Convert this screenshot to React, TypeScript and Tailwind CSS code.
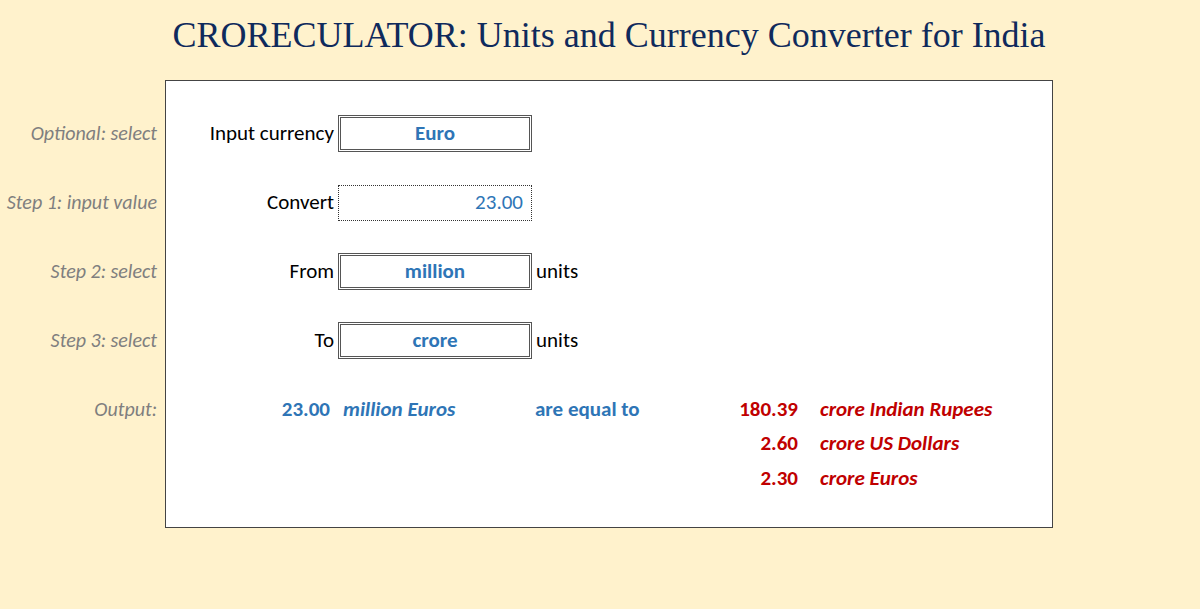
const labelFont = "font-['Carlito','Open_Sans',sans-serif]";

function StepLabel({ children }: { children: string }) {
  return (
    <div className="flex h-[69px] items-center justify-end whitespace-nowrap pr-[8px] text-[20px] italic text-[#7f7f7f]">
      <span>{children}</span>
    </div>
  );
}

function SelectBox({ value }: { value: string }) {
  return (
    <div className="flex h-[37px] w-[194px] items-center justify-center border-[3px] border-double border-[#555] bg-white text-[21px] font-bold text-[#2e75b6]">
      {value}
    </div>
  );
}

function FieldRow({
  label,
  children,
  suffix,
}: {
  label: string;
  children: React.ReactNode;
  suffix?: string;
}) {
  return (
    <div className="flex h-[69px] items-center">
      <div className="w-[168px] whitespace-nowrap text-right text-[21px] text-black">{label}</div>
      <div className="ml-[4px]">{children}</div>
      {suffix ? <div className="ml-[4px] text-[21px] text-black">{suffix}</div> : null}
    </div>
  );
}

function ResultLine({ amount, unit }: { amount: string; unit: string }) {
  return (
    <div className="flex h-[34.5px] items-center whitespace-nowrap text-[21px] font-bold text-[#c00000]">
      <div className="w-[166px] text-right">{amount}</div>
      <div className="ml-[22px] italic">{unit}</div>
    </div>
  );
}

export default function App() {
  return (
    <div className={`min-h-[609px] w-full bg-[#fff2cc] ${labelFont}`}>
      <div className="ml-[165px] w-[888px] pt-[14px] text-center font-['Liberation_Serif',serif] text-[36px] leading-[42px] text-[#0f2a5c]">
        CRORECULATOR: Units and Currency Converter for India
      </div>

      <div className="mt-[24px] flex">
        <div className="w-[165px] pt-[18px]">
          <StepLabel>Optional: select</StepLabel>
          <StepLabel>Step 1: input value</StepLabel>
          <StepLabel>Step 2: select</StepLabel>
          <StepLabel>Step 3: select</StepLabel>
          <StepLabel>Output:</StepLabel>
        </div>

        <div className="h-[448px] w-[888px] border border-[#444] bg-white pt-[18px]">
          <FieldRow label="Input currency">
            <SelectBox value="Euro" />
          </FieldRow>
          <FieldRow label="Convert">
            <div className="flex h-[36px] w-[194px] items-center justify-end border border-dotted border-[#333] pr-[8px] text-[21px] text-[#2e75b6]">
              23.00
            </div>
          </FieldRow>
          <FieldRow label="From" suffix="units">
            <SelectBox value="million" />
          </FieldRow>
          <FieldRow label="To" suffix="units">
            <SelectBox value="crore" />
          </FieldRow>

          <div className="flex pt-[17px]">
            <div className="flex h-[34.5px] w-[466px] items-center whitespace-nowrap text-[21px] font-bold text-[#2e75b6]">
              <div className="w-[164px] text-right">23.00</div>
              <div className="ml-[13px] italic">million Euros</div>
              <div className="ml-auto w-[97px]">are equal to</div>
            </div>
            <div>
              <ResultLine amount="180.39" unit="crore Indian Rupees" />
              <ResultLine amount="2.60" unit="crore US Dollars" />
              <ResultLine amount="2.30" unit="crore Euros" />
            </div>
          </div>
        </div>
      </div>
    </div>
  );
}
